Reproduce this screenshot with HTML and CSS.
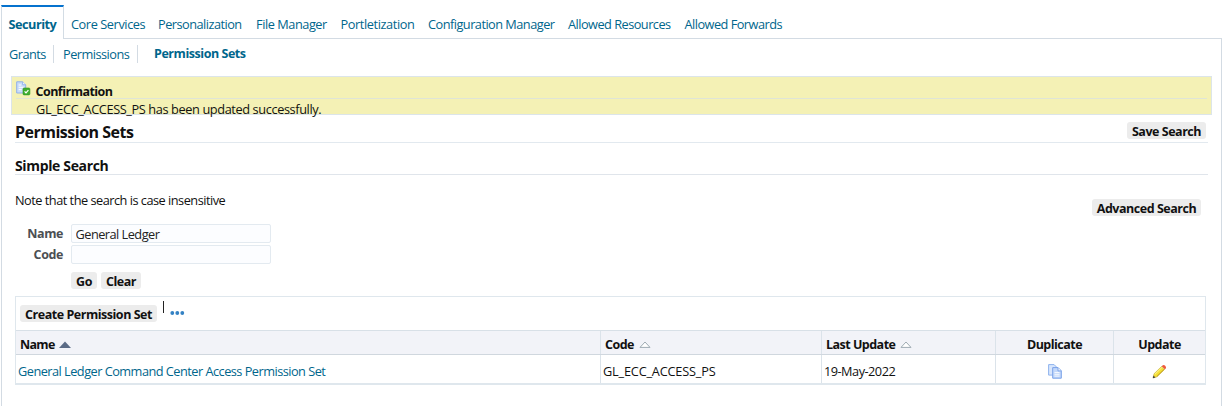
FILE: index.html
```html
<!DOCTYPE html>
<html lang="en">
<head>
<meta charset="utf-8">
<title>Permission Sets</title>
<link rel="stylesheet" href="styles.css">
</head>
<body>
<nav class="tabs">
  <a class="tab active">Security</a>
  <a class="tab t-core">Core Services</a>
  <a class="tab t-pers">Personalization</a>
  <a class="tab t-file">File Manager</a>
  <a class="tab t-port">Portletization</a>
  <a class="tab t-conf">Configuration Manager</a>
  <a class="tab t-res">Allowed Resources</a>
  <a class="tab t-fwd">Allowed Forwards</a>
</nav>
<main class="panel">
  <nav class="subtabs">
    <a class="sub s-grants">Grants</a>
    <a class="sub s-perms">Permissions</a>
    <a class="sub s-sets">Permission Sets</a>
  </nav>
  <section class="message">
    <div class="message-head">
      <svg class="message-icon" width="16" height="16" viewBox="0 0 16 16">
        <path d="M.7.8h6l3 3v8.2h-9z" fill="#c9dcfa" stroke="#8fb1e8"/>
        <path d="M6.7.8v3h3" fill="#fff" stroke="#8fb1e8"/>
        <path d="M2.7 4h2.5M2.7 6.3h5M2.7 8.6h3" stroke="#fff"/>
        <rect x="7" y="7" width="6.9" height="6.9" rx="1" fill="#3fae2f" stroke="#2b9420" stroke-width=".6"/>
        <path d="M8.6 10.4l1.4 1.5 2.4-2.8" fill="none" stroke="#fff" stroke-width="1.2"/>
      </svg>
      <strong class="message-title">Confirmation</strong>
    </div>
    <div class="message-text">GL_ECC_ACCESS_PS has been updated successfully.</div>
  </section>
  <header class="page-head">
    <h1 class="title">Permission Sets</h1>
    <button class="btn b-save">Save Search</button>
  </header>
  <h2 class="subtitle">Simple Search</h2>
  <div class="note-row">
    <p class="note">Note that the search is case insensitive</p>
    <button class="btn b-adv">Advanced Search</button>
  </div>
  <form class="search">
    <label class="label l-name" for="name">Name</label>
    <input class="field" id="name" value="General Ledger">
    <label class="label l-code" for="code">Code</label>
    <input class="field" id="code">
  </form>
  <div class="actions">
    <button class="btn b-go">Go</button>
    <button class="btn b-clear">Clear</button>
  </div>
  <section class="results">
    <div class="toolbar">
      <button class="btn b-create">Create Permission Set</button>
      <span class="divider"></span>
      <svg class="more" width="16" height="6" viewBox="0 0 16 6"><g fill="#3482c4"><circle cx="2.3" cy="3" r="1.9"/><circle cx="7.3" cy="3" r="1.9"/><circle cx="12.3" cy="3" r="1.9"/></g></svg>
    </div>
    <div class="row head">
      <div class="cell h-name">Name<svg class="sort" width="12" height="7" viewBox="0 0 12 7"><path d="M0 7L6 .5 12 7z" fill="#5b6b86"/></svg></div>
      <div class="cell h-code">Code<svg class="sort" width="12" height="7" viewBox="0 0 12 7"><path d="M1 6.4L6 1l5 5.4z" fill="#fff" stroke="#9eabb3"/></svg></div>
      <div class="cell h-last">Last Update<svg class="sort" width="12" height="7" viewBox="0 0 12 7"><path d="M1 6.4L6 1l5 5.4z" fill="#fff" stroke="#9eabb3"/></svg></div>
      <div class="cell center h-dup">Duplicate</div>
      <div class="cell center h-upd">Update</div>
    </div>
    <div class="row data">
      <div class="cell"><a class="link">General Ledger Command Center Access Permission Set</a></div>
      <div class="cell d-code">GL_ECC_ACCESS_PS</div>
      <div class="cell d-date">19-May-2022</div>
      <div class="cell center">
        <svg class="copy-icon" width="14" height="15" viewBox="0 0 14 15">
          <path d="M.6.6h5.5l2.5 2.5v8H.6z" fill="#d8e6fc" stroke="#8fb3ee"/>
          <path d="M4.7 3.6h5.4l3.2 3.2v7.4H4.7z" fill="#c3d8fa" stroke="#79a2e8"/>
          <path d="M10 3.8v3.1h3.1" fill="#fff" stroke="#79a2e8"/>
          <path d="M6.5 8.5h5M6.5 10.3h5M6.5 12.1h5" stroke="#fff" stroke-width=".8"/>
        </svg>
      </div>
      <div class="cell center">
        <svg class="pencil-icon" width="15" height="15" viewBox="0 0 15 15">
          <path d="M1 14l1-4.2L10 2l3 3-8 7.8z" fill="#f4df35" stroke="#b8a23a" stroke-width=".5"/>
          <path d="M2.8 10.4l8-7.7" stroke="#fff796" stroke-width="1"/>
          <path d="M4.8 12.5l7.8-7.6" stroke="#b88f1c" stroke-width=".8"/>
          <path d="M9.6 2.4l1-1 3 3-1 1z" fill="#c9cbd0"/>
          <path d="M10.3 1.7q1.4-1.4 2.9.1t.5 2.8l-.8.7-3.2-3.1z" fill="#f05a3c"/>
          <path d="M.8 14.2l.6-2.6 2.1 2z" fill="#444"/>
        </svg>
      </div>
    </div>
  </section>
</main>
</body>
</html>
```
FILE: styles.css
```css
* { box-sizing: border-box; }
body {
  margin: 0;
  height: 406px;
  overflow: hidden;
  padding: 5px 2px 0 1px;
  background: #fff;
  color: #111;
  font: 12.75px/18px "Open Sans", "Noto Sans", sans-serif;
  letter-spacing: -0.52px;
  white-space: nowrap;
}
.tabs {
  display: grid;
  grid-template-columns: 63px 87px 98px 84.5px 87.5px 140px 116.5px 110px;
  height: 34px;
}
.tab { padding: 10px 0 0 7px; color: #00668c; }
.t-core { letter-spacing: -0.42px; }
.t-file { letter-spacing: -0.45px; }
.t-port { letter-spacing: -0.4px; }
.tab.active {
  position: relative;
  padding: 8px 0 0 6.5px;
  height: 34px;
  border-top: 2px solid #0572ce;
  border-left: 1px solid #d3dce4;
  border-right: 1px solid #d3dce4;
  background: #fff;
  font-weight: 700;
  z-index: 1;
}
.panel {
  height: 380px;
  margin-top: -1px;
  border: 1px solid #d3dbe3;
  padding: 6px 9px 0;
}
.subtabs { display: flex; height: 31px; margin-left: -2px; }
.sub { height: 18px; color: #00668c; }
.s-grants { width: 45px; border-right: 1px solid #d3dbe3; }
.s-perms { width: 84px; padding-left: 9px; border-right: 1px solid #d3dbe3; }
.s-sets { padding-left: 16px; font-size: 12.5px; font-weight: 700; letter-spacing: -0.45px; }
.message {
  height: 39px;
  background: #f4f1b5;
  border: 1px solid #dce5e9;
  padding: 0 4px;
}
.message-head {
  display: flex;
  height: 22px;
  border-bottom: 1px solid #dfe5d7;
}
.message-icon { margin-top: 4px; }
.message-title { margin: 6px 0 0 3.5px; font-size: 12.5px; line-height: 18px; }
.message-text { margin: 1px 0 0 20px; line-height: 18px; letter-spacing: -0.39px; }
.page-head {
  display: flex;
  justify-content: space-between;
  align-items: flex-start;
  height: 28px;
  margin: 0 4px;
  border-bottom: 1px solid #e2e9ef;
}
.title { margin: 7px 0 0; font-size: 16px; line-height: 20px; letter-spacing: -0.5px; }
.subtitle {
  height: 32px;
  margin: 0 4px;
  padding-top: 13px;
  border-bottom: 1px solid #e0e5eb;
  font-size: 14px;
  line-height: 20px;
  letter-spacing: -0.35px;
}
.note-row { display: flex; justify-content: space-between; height: 49px; margin: 0 11px 0 4px; }
.note { margin: 16px 0 0; letter-spacing: -0.5px; }
.btn {
  height: 17px;
  padding: 2px 0 0;
  border: 0;
  border-radius: 3px;
  background: #ececec;
  color: #111;
  font: 700 12.5px/15px "Open Sans", "Noto Sans", sans-serif;
  letter-spacing: -0.47px;
  white-space: nowrap;
}
.b-save { width: 79px; margin: 7px 2px 0 0; }
.b-adv { width: 109px; margin-top: 24px; }
.search { display: grid; grid-template-columns: 52px 200px; column-gap: 8px; row-gap: 1px; grid-auto-rows: 20px; }
.label { text-align: right; color: #4c4f53; font-size: 12.5px; font-weight: 700; line-height: 20px; letter-spacing: -0.4px; }
.field {
  height: 19px;
  border: 1px solid #e3eaf0;
  border-radius: 2px;
  background: #fcfdff;
  padding: 0 3.5px;
  color: #222;
  font: 12.75px/17px "Open Sans", "Noto Sans", sans-serif;
  letter-spacing: -0.52px;
}
.actions { display: flex; gap: 4px; height: 31px; padding: 7px 0 0 60px; }
.b-go { width: 26px; }
.b-clear { width: 40px; }
.results { width: 1191px; margin-left: 4px; border: 1px solid #dfe7ed; border-bottom-width: 2px; }
.toolbar { display: flex; height: 33px; padding-left: 4px; }
.b-create { width: 137px; margin-top: 8px; }
.divider { width: 1px; height: 12px; margin: 4px 0 0 6px; background: #222; }
.more { margin: 13px 0 0 6px; }
.row { display: grid; grid-template-columns: 585px 221px 174px 118px 1fr; grid-template-rows: 100%; }
.cell { border-right: 1px solid #dbe3ea; padding-left: 2px; }
.cell:last-child { border-right: 0; }
.center { text-align: center; padding-left: 0; }
.head { height: 25px; background: #f2f3f8; border-top: 1px solid #d8e0e7; border-bottom: 1px solid #d0d7de; font-size: 12.5px; font-weight: 700; }
.head .cell { line-height: 27px; }
.head .cell:not(.center) { padding-left: 4px; }
.sort { margin-left: 5px; vertical-align: 1px; }
.h-name { letter-spacing: -0.7px; }
.h-name .sort { margin-left: 4px; }
.data { height: 28px; }
.data .cell { line-height: 32px; }
.data .d-code { letter-spacing: -0.2px; }
.link { color: #00668c; }
.copy-icon, .pencil-icon { display: block; margin: 9px auto 0; }
```
